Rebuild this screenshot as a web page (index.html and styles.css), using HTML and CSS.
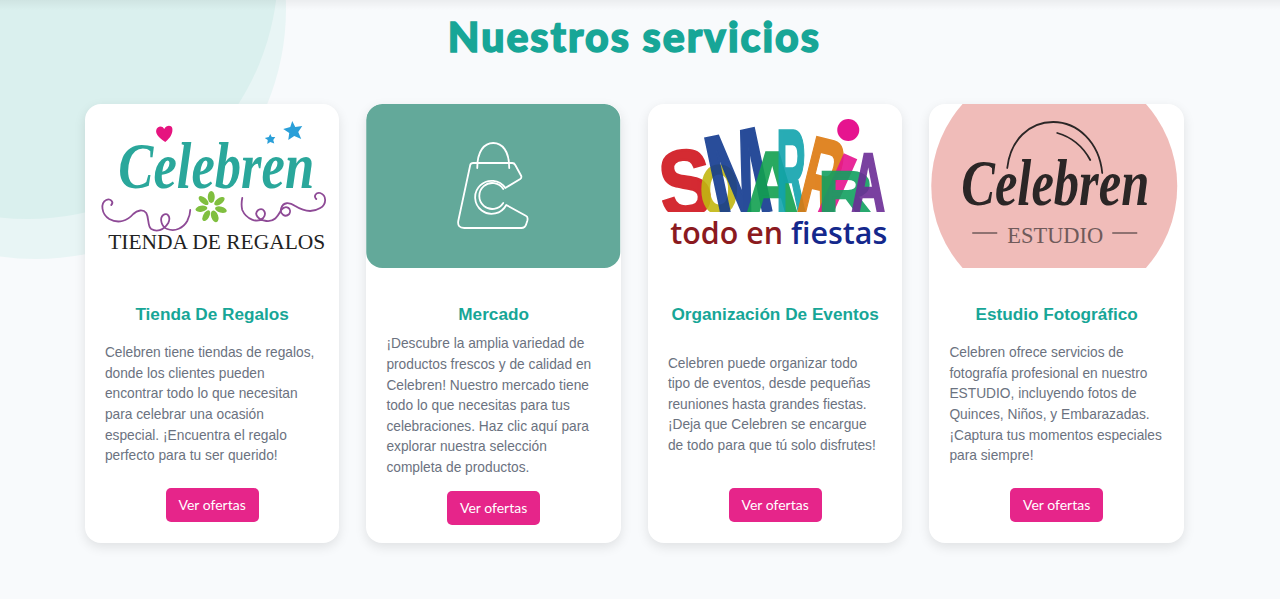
FILE: index.html
```html
<!DOCTYPE html>
<html lang="es">
<head>
    <meta charset="UTF-8">
    <meta name="viewport" content="width=device-width, initial-scale=1.0">
    <title>Nuestros servicios</title>
    <link rel="stylesheet" href="styles.css">
</head>
<body>
    <div class="circle circle-outer"></div>
    <div class="circle circle-inner"></div>
    <div class="top-shade"></div>

    <section class="services">
        <h1>Nuestros servicios</h1>

        <div class="service-grid">
            <article class="card">
                <svg class="card-image" viewBox="0 0 254 164">
                    <path d="M80 38c-6-4-10-8-9-12 1-4 6-5 8-1 2-4 7-4 8-1 1 5-2 10-7 14z" fill="#e6147f"/>
                    <path d="M207 17l3 6 7-1-4 6 3 7-7-3-6 4 1-7-6-4 7-2z" fill="#2a9fd8"/>
                    <path d="M185 30l1.500 3 3.500 0-2 3 1 3.500-4-1.500-3 2 .5-4-3-2 4-1z" fill="#2a9fd8"/>
                    <text class="logo-script" x="33" y="84" textLength="196" lengthAdjust="spacingAndGlyphs" fill="#2aa79b">Celebren</text>
                    <g class="swirl">
                        <path d="M26 101c3-3-1-7-5-5-6 3-5 14 3 19 9 5 18 2 24-5 4-4 10-5 13-1 3 5 1 13 5 16 5 3 12 2 17-6 3-6-1-11-5-8-4 3-2 12 4 14 8 3 16-1 20-8 2-4 3-8 3-11"/>
                        <path d="M231 95c-3-3 0-7 4-6 6 2 7 11 0 15-8 5-17 3-25-2-6-4-12-4-14 2-2 6 4 10 8 6 3-5-3-10-8-4-4 7-7 12-15 11-8-1-13-7-8-11 5-3 9 3 5 8-6 6-17 1-21-8-1-4-1-7 0-12"/>
                    </g>
                    <g fill="#80bf3f">
                        <ellipse cx="126" cy="93" rx="3.500" ry="6"/>
                        <ellipse cx="126" cy="93" rx="3" ry="6" transform="rotate(55 126 103)"/>
                        <ellipse cx="126" cy="93" rx="3" ry="6" transform="rotate(105 126 103)"/>
                        <ellipse cx="126" cy="93" rx="3.500" ry="6" transform="rotate(160 126 103)"/>
                        <ellipse cx="126" cy="93" rx="3" ry="6" transform="rotate(210 126 103)"/>
                        <ellipse cx="126" cy="93" rx="3" ry="6" transform="rotate(260 126 103)"/>
                        <ellipse cx="126" cy="93" rx="3" ry="6" transform="rotate(310 126 103)"/>
                    </g>
                    <text class="logo-caps" x="23" y="145" font-size="22" textLength="217" lengthAdjust="spacingAndGlyphs" fill="#222">TIENDA DE REGALOS</text>
                </svg>
                <div class="card-body">
                    <h3>Tienda De Regalos</h3>
                    <div class="card-text">
                        <p>Celebren tiene tiendas de regalos, donde los clientes pueden encontrar todo lo que necesitan para celebrar una ocasión especial. ¡Encuentra el regalo perfecto para tu ser querido!</p>
                    </div>
                    <a class="btn" href="#">Ver ofertas</a>
                </div>
            </article>

            <article class="card card-long">
                <svg class="card-image" viewBox="0 0 254 164">
                    <rect width="254" height="164" rx="16" fill="#63a99a"/>
                    <g fill="none" stroke="#fff" stroke-width="1.800" stroke-linecap="round" stroke-linejoin="round">
                        <path d="M111 64c0-17 7-25 16-25s16 8 16 25"/>
                        <path d="M104 61q.5-2 3-2h39q2 0 3 2l6 11q.5 2-1 3l-15 9A16.500 16.500 0 1 0 140 101l20 11q2 1 1 5l-1 3q-1 4-5 4H98q-7 0-6-7z"/>
                        <path d="M137 85A13 13 0 1 0 137 99"/>
                    </g>
                </svg>
                <div class="card-body">
                    <h3>Mercado</h3>
                    <div class="card-text">
                        <p>¡Descubre la amplia variedad de productos frescos y de calidad en Celebren! Nuestro mercado tiene todo lo que necesitas para tus celebraciones. Haz clic aquí para explorar nuestra selección completa de productos.</p>
                    </div>
                    <a class="btn" href="#">Ver ofertas</a>
                </div>
            </article>

            <article class="card">
                <svg class="card-image" viewBox="0 0 254 164">
                    <defs>
                        <clipPath id="baseline-clip"><rect width="254" height="108"/></clipPath>
                    </defs>
                    <g class="logo-letters" clip-path="url(#baseline-clip)">
                        <text transform="rotate(-6 36 108)" x="14" y="112" font-size="94" textLength="52" lengthAdjust="spacingAndGlyphs" fill="#d0141c" stroke="#d0141c">S</text>
                        <text x="52" y="109" font-size="68" textLength="38" lengthAdjust="spacingAndGlyphs" fill="#c2b712" stroke="#c2b712">O</text>
                        <text transform="rotate(-12 96 108)" x="68" y="112" font-size="122" textLength="60" lengthAdjust="spacingAndGlyphs" fill="#123a8f" stroke="#123a8f">M</text>
                        <text x="98" y="108" font-size="88" textLength="52" lengthAdjust="spacingAndGlyphs" fill="#12a050" stroke="#12a050">A</text>
                        <text x="128" y="110" font-size="120" textLength="30" lengthAdjust="spacingAndGlyphs" fill="#12a3ad" stroke="#12a3ad">R</text>
                        <text transform="rotate(14 150 108)" x="146" y="112" font-size="118" textLength="38" lengthAdjust="spacingAndGlyphs" fill="#dd7a10" stroke="#dd7a10">R</text>
                        <text transform="rotate(24 172 108)" x="165" y="112" font-size="96" textLength="24" lengthAdjust="spacingAndGlyphs" fill="#e6148f" stroke="#e6148f">I</text>
                        <text x="170" y="110" font-size="62" textLength="54" lengthAdjust="spacingAndGlyphs" fill="#12a060" stroke="#12a060">R</text>
                        <text x="203" y="108" font-size="84" textLength="34" lengthAdjust="spacingAndGlyphs" fill="#6c2d96" stroke="#6c2d96">A</text>
                    </g>
                    <circle cx="200" cy="26" r="11" fill="#e6148f"/>
                    <text class="logo-slogan" x="22" y="140" textLength="217" lengthAdjust="spacingAndGlyphs"><tspan fill="#8b1a20">todo en </tspan><tspan fill="#14288c">fiestas</tspan></text>
                </svg>
                <div class="card-body">
                    <h3>Organización De Eventos</h3>
                    <div class="card-text">
                        <p>Celebren puede organizar todo tipo de eventos, desde pequeñas reuniones hasta grandes fiestas. ¡Deja que Celebren se encargue de todo para que tú solo disfrutes!</p>
                    </div>
                    <a class="btn" href="#">Ver ofertas</a>
                </div>
            </article>

            <article class="card">
                <svg class="card-image" viewBox="0 0 254 164">
                    <circle cx="125" cy="82" r="123" fill="#f0bcb9"/>
                    <g fill="none" stroke="#2b2626" stroke-linecap="round">
                        <path d="M78 64c3-28 22-46 46-46 24 0 46 20 49 51" stroke-width="1.800"/>
                        <path d="M128 29c14 4 26 14 33 27" stroke-width="1.800"/>
                    </g>
                    <text class="logo-script" x="32" y="101" textLength="188" lengthAdjust="spacingAndGlyphs" fill="#2b2626">Celebren</text>
                    <text class="logo-caps" x="78" y="139" font-size="24" textLength="96" lengthAdjust="spacingAndGlyphs" fill="#6f5a5a">ESTUDIO</text>
                    <path d="M43 129h25M183 129h25" stroke="#6f5a5a" stroke-width="1.500"/>
                </svg>
                <div class="card-body">
                    <h3>Estudio Fotográfico</h3>
                    <div class="card-text">
                        <p>Celebren ofrece servicios de fotografía profesional en nuestro ESTUDIO, incluyendo fotos de Quinces, Niños, y Embarazadas. ¡Captura tus momentos especiales para siempre!</p>
                    </div>
                    <a class="btn" href="#">Ver ofertas</a>
                </div>
            </article>
        </div>
    </section>
</body>
</html>
```

FILE: styles.css
```css
body {
    margin: 0;
    height: 599px;
    overflow: hidden;
    position: relative;
    background-color: #f8fafc;
    font-family: "Liberation Sans", Arial, sans-serif;
}

/* background decoration */
.circle {
    position: absolute;
    width: 500px;
    height: 500px;
    border-radius: 50%;
}

.circle-outer {
    left: -214px;
    top: -241px;
    background-color: #e8f5f5;
}

.circle-inner {
    left: -222px;
    top: -281px;
    background-color: #daf0ee;
}

.top-shade {
    position: absolute;
    top: 0;
    left: 0;
    right: 0;
    height: 10px;
    background: linear-gradient(rgba(0, 0, 0, 0.05), rgba(0, 0, 0, 0));
}

.services {
    position: relative;
    width: 1099px;
    margin-left: 84.9px;
}

h1 {
    margin: 0;
    height: 104px;
    padding-top: 12px;
    box-sizing: border-box;
    text-align: center;
    font-family: Lato, sans-serif;
    font-size: 41px;
    font-weight: 900;
    line-height: 50px;
    letter-spacing: 2px;
    color: #17a697;
    -webkit-text-stroke: 1.5px #17a697;
}

.service-grid {
    display: grid;
    grid-template-columns: repeat(4, 254.5px);
    gap: 27px;
}

.card {
    height: 439px;
    display: flex;
    flex-direction: column;
    background-color: #fff;
    border-radius: 16px;
    box-shadow: 0 4px 12px rgba(0, 0, 0, 0.1);
    overflow: hidden;
}

.card-image {
    display: block;
    width: 100%;
    height: 164px;
    flex: none;
}

.card-body {
    flex: 1;
    display: flex;
    flex-direction: column;
    align-items: center;
    padding: 0 20px 21px;
}

h3 {
    margin: 36px 0 0;
    font-size: 17.2px;
    line-height: 21px;
    font-weight: 700;
    color: #17a697;
    text-align: center;
    white-space: nowrap;
}

.card-text {
    flex: 1;
    display: flex;
    align-items: center;
    margin-bottom: 3px;
}

.card-text p {
    margin: 0;
    font-size: 13.75px;
    line-height: 20.6px;
    color: #6b7280;
}

.card-long .card-body {
    padding-bottom: 18px;
}

.btn {
    display: block;
    width: 93px;
    height: 34px;
    line-height: 34px;
    text-align: center;
    text-decoration: none;
    font-family: Lato, sans-serif;
    font-size: 14px;
    color: #fff;
    background-color: #e6258a;
    border-radius: 5px;
}

/* logo lettering */
.logo-script {
    font-family: "Liberation Serif", serif;
    font-style: italic;
    font-weight: 700;
    font-size: 66px;
}

.logo-caps {
    font-family: "Liberation Serif", serif;
}

.logo-letters text {
    font-family: "Liberation Sans", sans-serif;
    font-weight: 700;
    stroke-width: 2.5px;
    opacity: 0.9;
}

.logo-slogan {
    font-family: "Open Sans", sans-serif;
    font-weight: 600;
    font-size: 31px;
}

.swirl path {
    fill: none;
    stroke: #8e4a96;
    stroke-width: 1.800;
    stroke-linecap: round;
}
```
